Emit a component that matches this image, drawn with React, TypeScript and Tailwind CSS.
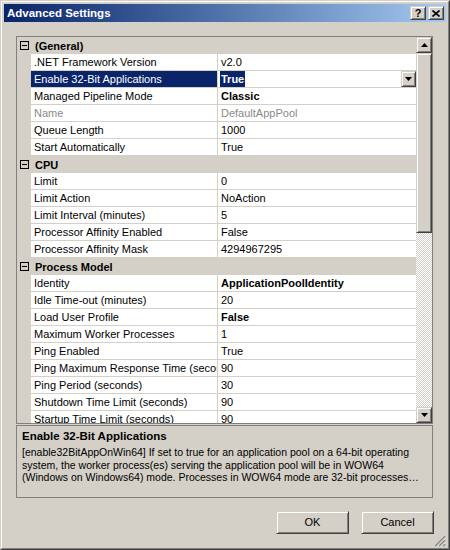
import type { ReactNode } from 'react';

type GridRow =
  | { kind: 'cat'; label: string }
  | {
      kind: 'prop';
      label: string;
      value: string;
      bold?: boolean;
      disabled?: boolean;
      selected?: boolean;
    };

const rows: GridRow[] = [
  { kind: 'cat', label: '(General)' },
  { kind: 'prop', label: '.NET Framework Version', value: 'v2.0' },
  { kind: 'prop', label: 'Enable 32-Bit Applications', value: 'True', bold: true, selected: true },
  { kind: 'prop', label: 'Managed Pipeline Mode', value: 'Classic', bold: true },
  { kind: 'prop', label: 'Name', value: 'DefaultAppPool', disabled: true },
  { kind: 'prop', label: 'Queue Length', value: '1000' },
  { kind: 'prop', label: 'Start Automatically', value: 'True' },
  { kind: 'cat', label: 'CPU' },
  { kind: 'prop', label: 'Limit', value: '0' },
  { kind: 'prop', label: 'Limit Action', value: 'NoAction' },
  { kind: 'prop', label: 'Limit Interval (minutes)', value: '5' },
  { kind: 'prop', label: 'Processor Affinity Enabled', value: 'False' },
  { kind: 'prop', label: 'Processor Affinity Mask', value: '4294967295' },
  { kind: 'cat', label: 'Process Model' },
  { kind: 'prop', label: 'Identity', value: 'ApplicationPoolIdentity', bold: true },
  { kind: 'prop', label: 'Idle Time-out (minutes)', value: '20' },
  { kind: 'prop', label: 'Load User Profile', value: 'False', bold: true },
  { kind: 'prop', label: 'Maximum Worker Processes', value: '1' },
  { kind: 'prop', label: 'Ping Enabled', value: 'True' },
  { kind: 'prop', label: 'Ping Maximum Response Time (seconds)', value: '90' },
  { kind: 'prop', label: 'Ping Period (seconds)', value: '30' },
  { kind: 'prop', label: 'Shutdown Time Limit (seconds)', value: '90' },
  { kind: 'prop', label: 'Startup Time Limit (seconds)', value: '90' },
  { kind: 'cat', label: 'Process Orphaning' },
];

// classic raised 3D edge used by buttons, scroll arrows and the thumb
const raised =
  'border border-t-[#d4d0c8] border-l-[#d4d0c8] border-r-[#404040] border-b-[#404040] shadow-[inset_1px_1px_0_#ffffff,inset_-1px_-1px_0_#808080] bg-[#d4d0c8]';

function Arrow({ up }: { up?: boolean }) {
  return (
    <svg width="7" height="4" viewBox="0 0 7 4" className="block">
      {up ? <path d="M3.5 0 L7 4 L0 4 Z" fill="#000" /> : <path d="M0 0 L7 0 L3.5 4 Z" fill="#000" />}
    </svg>
  );
}

function ArrowButton({ up, className = '' }: { up?: boolean; className?: string }) {
  return (
    <div className={`${raised} flex items-center justify-center ${className}`}>
      <Arrow up={up} />
    </div>
  );
}

function CategoryRow({ label }: { label: string }) {
  return (
    <div className="flex h-[17px] shrink-0 items-center bg-[#d4d0c8]">
      <div className="ml-[3px] flex h-[9px] w-[9px] items-center justify-center border border-[#000000]">
        <div className="h-px w-[5px] bg-[#000000]" />
      </div>
      <span className="ml-[6px] font-bold leading-[16px]">{label}</span>
    </div>
  );
}

function PropRow({ row }: { row: Extract<GridRow, { kind: 'prop' }> }) {
  const nameCls = row.selected
    ? 'bg-[#0a246a] text-white'
    : row.disabled
      ? 'bg-white text-[#8a8a8a]'
      : 'bg-white text-black';
  let value: ReactNode = row.value;
  if (row.selected) {
    value = <span className="bg-[#0a246a] px-px text-white">{row.value}</span>;
  }
  return (
    <div className="flex h-[17px] shrink-0 bg-[#d4d0c8]">
      <div className="w-[14px] shrink-0" />
      <div
        className={`h-[16px] w-[186px] shrink-0 overflow-hidden whitespace-nowrap pl-[3px] leading-[16px] ${nameCls}`}
      >
        {row.label}
      </div>
      <div className="w-px shrink-0" />
      <div
        className={`flex h-[16px] min-w-0 flex-1 items-center whitespace-nowrap bg-white leading-[16px] ${
          row.selected ? 'pl-[2px]' : 'pl-[3px]'
        } ${row.bold ? 'font-bold' : ''} ${row.disabled ? 'text-[#8a8a8a]' : 'text-black'}`}
      >
        {value}
        {row.selected && <ArrowButton className="ml-auto h-[16px] w-[15px]" />}
      </div>
    </div>
  );
}

function ScrollBar() {
  return (
    <div className="flex w-[16px] shrink-0 flex-col">
      <ArrowButton up className="h-[16px] shrink-0" />
      <div className={`${raised} h-[180px] shrink-0`} />
      <div className="flex-1 bg-[repeating-conic-gradient(#ffffff_0%_25%,#d4d0c8_0%_50%)] bg-[length:2px_2px]" />
      <ArrowButton className="h-[16px] shrink-0" />
    </div>
  );
}

function WinButton({ children }: { children: ReactNode }) {
  return (
    <div className={`${raised} flex h-[23px] w-[73px] items-center justify-center text-[11px] text-black`}>
      {children}
    </div>
  );
}

export default function App() {
  return (
    <div className="h-[550px] w-[450px] font-['Liberation_Sans',Arial,sans-serif] text-[11px] text-black">
      <div className="h-full border border-t-[#d4d0c8] border-l-[#d4d0c8] border-r-[#404040] border-b-[#404040]">
        <div className="h-full border border-t-white border-l-white border-r-[#808080] border-b-[#808080]">
          <div className="flex h-full flex-col bg-[#d4d0c8] p-[2px]">
            {/* title bar */}
            <div className="flex h-[18px] shrink-0 items-center bg-gradient-to-r from-[#0a246a] to-[#a6caf0] pr-[2px]">
              <span className="ml-[3px] text-[11.5px] font-bold leading-[18px] text-white">Advanced Settings</span>
              <div className={`${raised} ml-auto flex h-[14px] w-[16px] items-center justify-center text-[11px] font-bold leading-none`}>
                ?
              </div>
              <div className={`${raised} ml-[2px] flex h-[14px] w-[16px] items-center justify-center`}>
                <svg width="8" height="7" viewBox="0 0 8 7" className="block">
                  <path d="M0.5 0.5 L7.5 6.5 M7.5 0.5 L0.5 6.5" stroke="#000" strokeWidth="1.6" />
                </svg>
              </div>
            </div>

            {/* property grid */}
            <div className="ml-[12px] mt-[14px] flex h-[388px] w-[417px] shrink-0 border border-[#808080]">
              <div className="flex min-w-0 flex-1 flex-col overflow-hidden bg-[#d4d0c8]">
                {rows.map((r, i) =>
                  r.kind === 'cat' ? <CategoryRow key={i} label={r.label} /> : <PropRow key={i} row={r} />,
                )}
              </div>
              <ScrollBar />
            </div>

            {/* description */}
            <div className="ml-[12px] mt-px h-[73px] w-[417px] shrink-0 border border-[#808080] px-[5px] pt-[3px]">
              <div className="whitespace-nowrap text-[11.5px] font-bold leading-[14px]">Enable 32-Bit Applications</div>
              <div className="mt-[3px] whitespace-nowrap text-[10.5px] leading-[12.5px]">
                <div>[enable32BitAppOnWin64] If set to true for an application pool on a 64-bit operating</div>
                <div>system, the worker process(es) serving the application pool will be in WOW64</div>
                <div>(Windows on Windows64) mode. Processes in WOW64 mode are 32-bit processes…</div>
              </div>
            </div>

            {/* buttons */}
            <div className="mt-[13px] flex shrink-0 justify-end gap-[12px] pr-[12px]">
              <WinButton>OK</WinButton>
              <WinButton>Cancel</WinButton>
            </div>

            <div className="mt-auto flex justify-end">
              <svg width="13" height="13" viewBox="0 0 13 13" className="block">
                <path d="M12 1 L1 12 M12 5 L5 12 M12 9 L9 12" stroke="#ffffff" strokeWidth="1" />
                <path d="M12 2 L2 12 M12 6 L6 12 M12 10 L10 12" stroke="#808080" strokeWidth="1.4" />
              </svg>
            </div>
          </div>
        </div>
      </div>
    </div>
  );
}
